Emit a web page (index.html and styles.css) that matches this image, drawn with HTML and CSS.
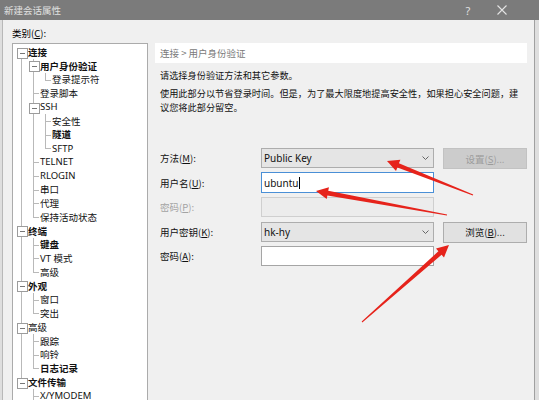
FILE: index.html
```html
<!DOCTYPE html>
<html lang="zh-CN">
<head>
<meta charset="utf-8">
<title>新建会话属性</title>
<link rel="stylesheet" href="styles.css">
</head>
<body>
<div class="screen">
  <div class="titlebar">
    <span class="title">新建会话属性</span>
    <span class="tb-btn help">?</span>
    <span class="tb-btn close"><svg width="10" height="10" viewBox="0 0 10 10"><path d="M0.5 0.5L9.5 9.5M9.5 0.5L0.5 9.5" stroke="#e4e4e4" stroke-width="1.1" fill="none"/></svg></span>
  </div>
  <div class="content">
    <div class="left">
      <div class="cat-label">类别(<u>C</u>):</div>
      <div class="tree">
        <ul>
          <li class="has"><div class="row b"><span class="tg"></span>连接</div>
            <ul>
              <li class="has"><div class="row b"><span class="tg"></span>用户身份验证</div>
                <ul>
                  <li><div class="row"><span class="tg"></span>登录提示符</div></li>
                </ul>
              </li>
              <li><div class="row"><span class="tg"></span>登录脚本</div></li>
              <li class="has"><div class="row"><span class="tg"></span>SSH</div>
                <ul>
                  <li><div class="row"><span class="tg"></span>安全性</div></li>
                  <li><div class="row b"><span class="tg"></span>隧道</div></li>
                  <li><div class="row"><span class="tg"></span>SFTP</div></li>
                </ul>
              </li>
              <li><div class="row"><span class="tg"></span>TELNET</div></li>
              <li><div class="row"><span class="tg"></span>RLOGIN</div></li>
              <li><div class="row"><span class="tg"></span>串口</div></li>
              <li><div class="row"><span class="tg"></span>代理</div></li>
              <li><div class="row"><span class="tg"></span>保持活动状态</div></li>
            </ul>
          </li>
          <li class="has"><div class="row b"><span class="tg"></span>终端</div>
            <ul>
              <li><div class="row b"><span class="tg"></span>键盘</div></li>
              <li><div class="row"><span class="tg"></span>VT 模式</div></li>
              <li><div class="row"><span class="tg"></span>高级</div></li>
            </ul>
          </li>
          <li class="has"><div class="row b"><span class="tg"></span>外观</div>
            <ul>
              <li><div class="row"><span class="tg"></span>窗口</div></li>
              <li><div class="row"><span class="tg"></span>突出</div></li>
            </ul>
          </li>
          <li class="has"><div class="row"><span class="tg"></span>高级</div>
            <ul>
              <li><div class="row"><span class="tg"></span>跟踪</div></li>
              <li><div class="row"><span class="tg"></span>响铃</div></li>
              <li><div class="row b"><span class="tg"></span>日志记录</div></li>
            </ul>
          </li>
          <li class="has"><div class="row b"><span class="tg"></span>文件传输</div>
            <ul>
              <li><div class="row"><span class="tg"></span>X/YMODEM</div></li>
              <li><div class="row"><span class="tg"></span>ZMODEM</div></li>
            </ul>
          </li>
        </ul>
      </div>
    </div>
    <div class="right">
      <div class="crumb">连接 &gt; 用户身份验证</div>
      <p class="intro">请选择身份验证方法和其它参数。</p>
      <p class="desc">使用此部分以节省登录时间。但是，为了最大限度地提高安全性，如果担心安全问题，建<br>议您将此部分留空。</p>
      <div class="form">
        <label class="lbl">方法(<u>M</u>):</label>
        <div class="combo"><span>Public Key</span><svg class="chev" width="7" height="4" viewBox="0 0 7 4"><path d="M0.5 0.5L3.5 3.5L6.5 0.5" stroke="#666" fill="none"/></svg></div>
        <button class="btn off" disabled>设置(<u>S</u>)...</button>

        <label class="lbl">用户名(<u>U</u>):</label>
        <div class="input focus"><span>ubuntu</span><span class="caret"></span></div>
        <span></span>

        <label class="lbl dis">密码(<u>P</u>):</label>
        <div class="input disabled"></div>
        <span></span>

        <label class="lbl">用户密钥(<u>K</u>):</label>
        <div class="combo"><span>hk-hy</span><svg class="chev" width="7" height="4" viewBox="0 0 7 4"><path d="M0.5 0.5L3.5 3.5L6.5 0.5" stroke="#666" fill="none"/></svg></div>
        <button class="btn">浏览(<u>B</u>)...</button>

        <label class="lbl">密码(<u>A</u>):</label>
        <div class="input"></div>
        <span></span>
      </div>
    </div>
  </div>
  <svg class="arrows" width="539" height="400" viewBox="0 0 539 400">
    <polygon points="473.2,194.5 398.9,163.3 400.4,159.8 387,161 396,171 397.4,167.5 472.8,195.5"/>
    <polygon points="447.1,214.5 328.2,190.8 329,187.3 316,191 326.7,199 327.4,195.4 446.9,215.5"/>
    <polygon points="362.3,322.4 441.6,254.7 444,257.4 449,245 436,248.6 438.4,251.3 361.7,321.6"/>
  </svg>
</div>
</body>
</html>
```
FILE: styles.css
```css
* { box-sizing: border-box; margin: 0; padding: 0; }
html, body { width: 539px; height: 400px; overflow: hidden; }
body {
  background: #dedede;
  font-family: "Noto Sans", "Noto Sans CJK SC", sans-serif;
  font-size: 9.5px;
  color: #000;
}
.screen { position: relative; width: 539px; height: 400px; overflow: hidden; }

.titlebar {
  height: 20px;
  background: #7b7b7b;
  color: #e0e0e0;
  display: flex;
  align-items: center;
  padding-left: 4px;
  padding-right: 20px;
}
.title { flex: 1; font-family: "Noto Sans CJK SC", sans-serif; }
.tb-btn { display: flex; align-items: center; justify-content: center; }
.help { width: 20px; margin-right: 7px; font-size: 11px; }
.close { width: 34px; }

.content {
  display: flex;
  height: 380px;
  background: #f0f0f0;
  margin: 0 4px 0 2px;
  border-left: 1px solid #b8b8b8;
  border-right: 1px solid #a0a0a0;
}
.left { width: 145px; padding-left: 9px; flex: none; }
.cat-label { padding-top: 6px; line-height: 14px; font-family: "Noto Sans CJK SC", sans-serif; }
.tree {
  margin-top: 3px;
  width: 136px;
  height: 360px;
  background: #fff;
  border: 1px solid #ababab;
  padding-top: 1px;
  overflow: hidden;
}
.tree ul { list-style: none; padding-left: 12px; }
.tree > ul { padding-left: 2px; }
.tree li { position: relative; }
.tree li::before {
  content: "";
  position: absolute;
  left: 6px;
  top: 0;
  bottom: 0;
  border-left: 1px solid #b9b9b9;
}
.tree li:last-child::before { bottom: auto; height: 7px; }
.tree > ul > li:first-child::before { top: 7px; }
.row {
  display: flex;
  align-items: center;
  height: 13.75px;
  white-space: nowrap;
  font-family: "Noto Sans", "Noto Sans CJK SC", sans-serif;
  color: #111;
}
.row.b { font-weight: bold; }
.tg { position: relative; width: 13px; height: 100%; flex: none; }
.tg::after {
  content: "";
  position: absolute;
  left: 6px;
  width: 6px;
  top: 7px;
  border-top: 1px solid #b9b9b9;
}
.has > .row > .tg::before {
  content: "";
  position: absolute;
  z-index: 1;
  left: 2px;
  top: 2.5px;
  width: 9px;
  height: 9px;
  border: 1px solid #9c9c9c;
  background: #fff linear-gradient(#777, #777) no-repeat center / 5px 1px;
}

.right { margin-left: 7px; padding-top: 23px; width: 372px; flex: none; }
.crumb {
  height: 20px;
  background: #fff;
  color: #7a7a7a;
  padding-left: 5px;
  line-height: 20px;
  font-family: "Noto Sans CJK SC", sans-serif;
}
.intro, .desc {
  margin-left: 5px;
  line-height: 14px;
  font-size: 9.2px;
  font-family: "Noto Sans CJK SC", sans-serif;
  color: #111;
}
.intro { margin-top: 5px; }
.desc { margin-top: 4px; white-space: nowrap; }

.form {
  display: grid;
  grid-template-columns: 92px 173px 84px;
  grid-template-rows: repeat(5, 20px);
  column-gap: 9px;
  row-gap: 4.5px;
  margin: 34px 0 0 5px;
  align-items: center;
}
.lbl { font-family: "Noto Sans CJK SC", sans-serif; color: #111; }
.lbl.dis { color: #a3a3a3; }
.combo {
  height: 20px;
  background: #e5e5e5;
  border: 1px solid #adadad;
  display: flex;
  align-items: center;
  justify-content: space-between;
  padding: 0 4px 0 2px;
  font-size: 10px;
  color: #111;
}
.chev { flex: none; }
.input {
  height: 20px;
  background: #fff;
  border: 1px solid #a5a5a5;
  display: flex;
  align-items: center;
  padding-left: 2px;
  font-size: 10px;
  color: #111;
}
.input.focus { border-color: #4a8fd6; height: 21px; }
.input.disabled { background: #ececec; border-color: #cfcfcf; }
.caret { width: 1px; height: 12px; background: #000; margin-left: 1px; }
.btn {
  height: 21px;
  margin-top: 1px;
  font-family: "Noto Sans CJK SC", sans-serif;
  font-size: 9.5px;
  background: #e1e1e1;
  border: 1px solid #adadad;
  color: #111;
}
.btn.off { background: #cccccc; border-color: #c2c2c2; color: #9c9c9c; }

.arrows { position: absolute; left: 0; top: 0; pointer-events: none; }
.arrows polygon { fill: #e6231b; }
```
